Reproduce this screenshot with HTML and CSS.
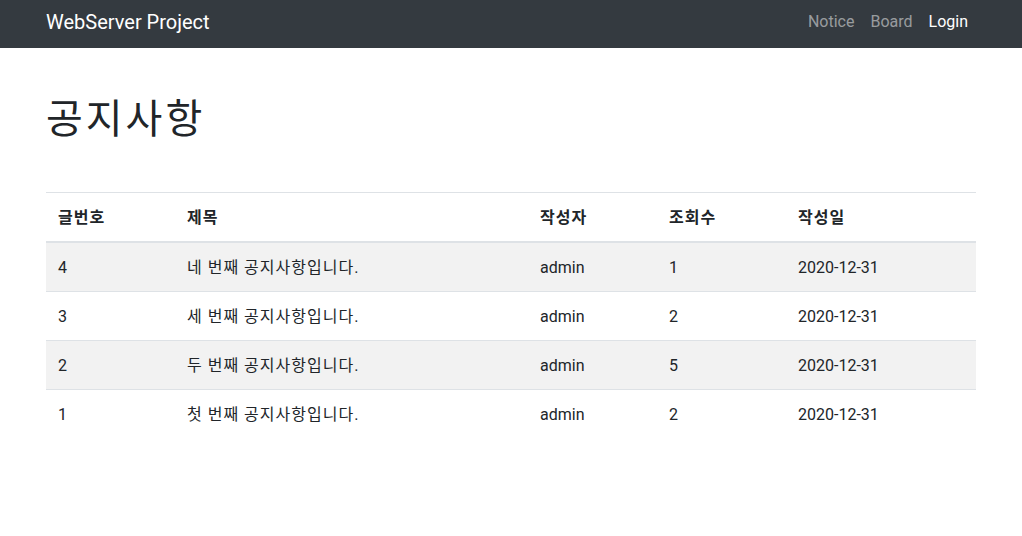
FILE: index.html
```html
<!DOCTYPE html>
<html lang="ko">
<head>
<meta charset="utf-8">
<title>WebServer Project</title>
<link rel="stylesheet" href="styles.css">
</head>
<body>
<nav class="navbar">
  <div class="container nav-inner">
    <a class="brand" href="#">WebServer Project</a>
    <ul class="nav-links">
      <li><a class="nav-link" href="#">Notice</a></li>
      <li><a class="nav-link" href="#">Board</a></li>
      <li><a class="nav-link active" href="#">Login</a></li>
    </ul>
  </div>
</nav>
<main class="container main">
  <h1 class="title">공지사항</h1>
  <table class="table">
    <thead>
      <tr>
        <th class="c-no ko">글번호</th>
        <th class="c-title ko">제목</th>
        <th class="c-author ko">작성자</th>
        <th class="c-views ko">조회수</th>
        <th class="c-date ko">작성일</th>
      </tr>
    </thead>
    <tbody>
      <tr><td>4</td><td class="ko">네 번째 공지사항입니다.</td><td>admin</td><td>1</td><td>2020-12-31</td></tr>
      <tr><td>3</td><td class="ko">세 번째 공지사항입니다.</td><td>admin</td><td>2</td><td>2020-12-31</td></tr>
      <tr><td>2</td><td class="ko">두 번째 공지사항입니다.</td><td>admin</td><td>5</td><td>2020-12-31</td></tr>
      <tr><td>1</td><td class="ko">첫 번째 공지사항입니다.</td><td>admin</td><td>2</td><td>2020-12-31</td></tr>
    </tbody>
  </table>
</main>
</body>
</html>
```

FILE: styles.css
```css
* { box-sizing: border-box; }
html, body {
  margin: 0;
  padding: 0;
}
body {
  font-family: Roboto, "Noto Sans CJK KR", sans-serif;
  font-size: 16px;
  line-height: 1.5;
  color: #212529;
  background: #fff;
}
.container {
  width: 960px;
  margin: 0 auto;
  padding: 0 15px;
}
.navbar {
  background: #343a40;
  height: 48px;
}
.nav-inner {
  display: flex;
  align-items: center;
  justify-content: space-between;
  height: 48px;
}
.brand {
  color: #fff;
  text-decoration: none;
  font-size: 20px;
  line-height: 30px;
  margin-top: -5px;
}
.nav-links {
  display: flex;
  list-style: none;
  margin: 0;
  padding: 0;
  margin-top: -5px;
}
.nav-link {
  display: block;
  padding: 0 8px;
  color: rgba(255, 255, 255, 0.5);
  text-decoration: none;
  line-height: 24px;
}
.nav-link.active { color: #fff; }
.main {
  padding-top: 48px;
}
.title {
  margin: 0 0 48px;
  font-size: 40px;
  font-weight: 400;
  line-height: 48px;
  letter-spacing: 3px;
}
.table {
  width: 100%;
  border-collapse: collapse;
  table-layout: fixed;
}
.table th, .table td {
  padding: 13px 12px 11px;
  text-align: left;
  border-top: 1px solid #dee2e6;
  line-height: 24px;
  vertical-align: top;
}
.table th {
  font-weight: 700;
  border-bottom: 2px solid #dee2e6;
}
.ko { letter-spacing: 1px; }
.table tbody tr:nth-child(odd) { background: rgba(0, 0, 0, 0.05); }
.c-no { width: 129px; }
.c-title { width: 353px; }
.c-author { width: 129px; }
.c-views { width: 129px; }
.c-date { width: 190px; }
```
